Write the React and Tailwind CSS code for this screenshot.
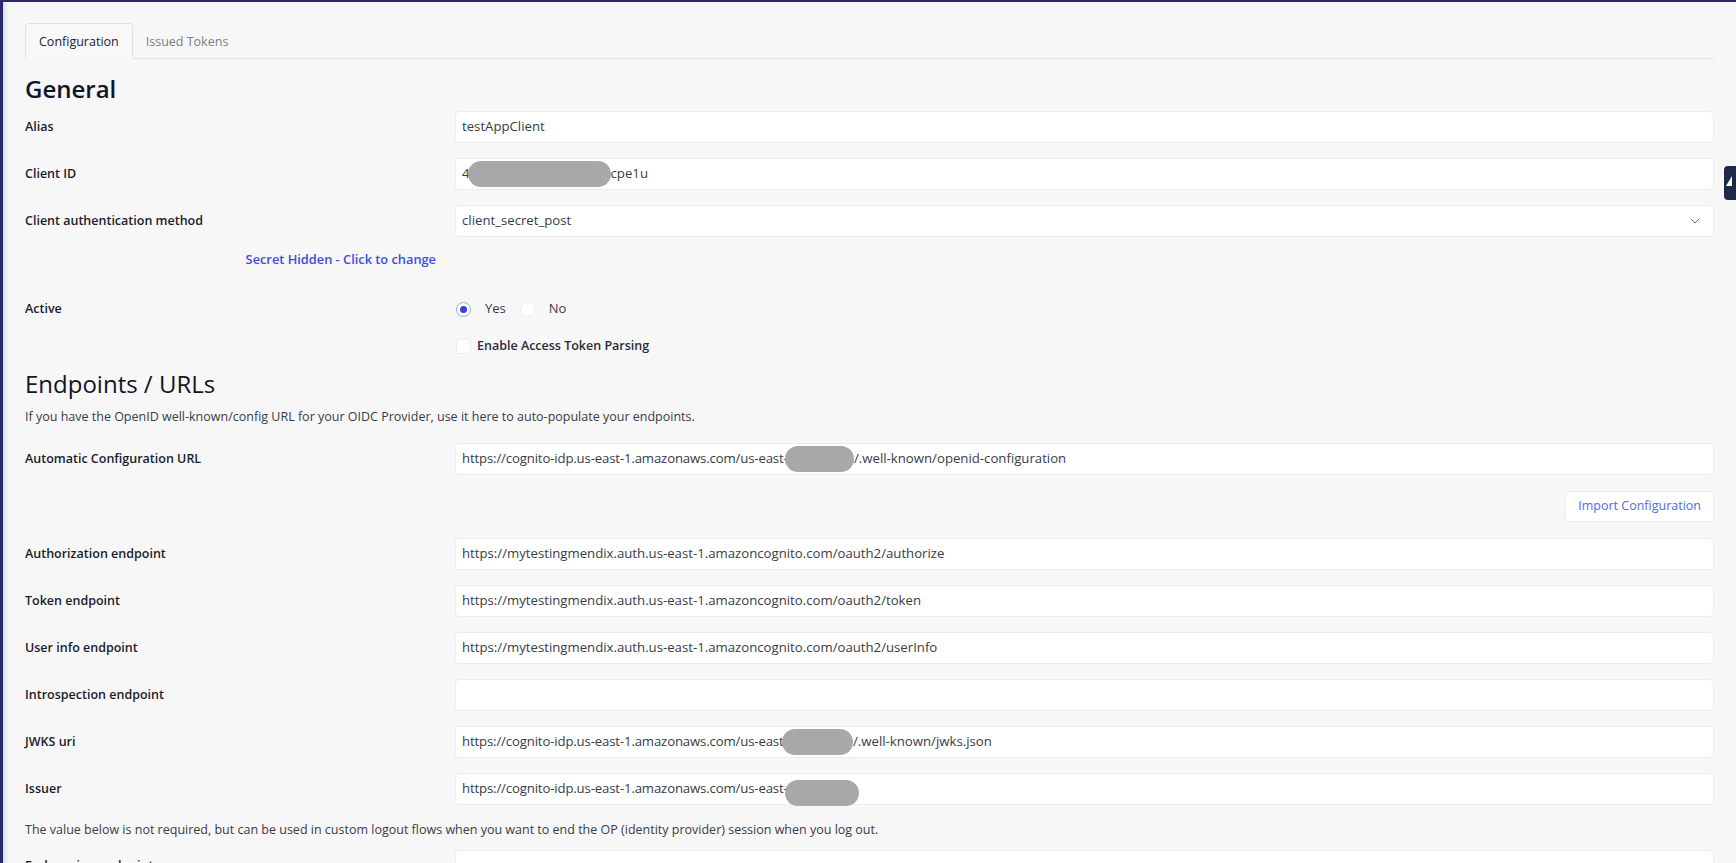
import { ChevronDown } from "lucide-react";

const Blob = ({ className }) => (
  <span className={`inline-block rounded-full bg-[#a8a8aa] align-middle ${className}`} />
);

const Field = ({ label, children, className = "" }) => (
  <div className={`flex items-center ${className}`}>
    <label className="w-[430px] shrink-0 text-[12.5px] font-semibold text-[#1b1d2a]">{label}</label>
    <div className="flex h-[32px] flex-1 items-center overflow-visible rounded-[4px] border border-[#ececec] bg-white px-[6px] text-[13.2px] whitespace-nowrap text-[#3a3c44]">
      {children}
    </div>
  </div>
);

const Radio = ({ checked, label }) => (
  <div className="flex items-center">
    <span
      className={`flex h-[15px] w-[15px] items-center justify-center rounded-full border bg-white ${
        checked ? "border-[#9aa6f2]" : "border-[#ececec]"
      }`}
    >
      {checked ? <span className="h-[7px] w-[7px] rounded-full bg-[#3346e2]" /> : null}
    </span>
    <span className="ml-[14px] text-[13px] text-[#3a3c44]">{label}</span>
  </div>
);

const endpoints = [
  { label: "Authorization endpoint", value: "https://mytestingmendix.auth.us-east-1.amazoncognito.com/oauth2/authorize" },
  { label: "Token endpoint", value: "https://mytestingmendix.auth.us-east-1.amazoncognito.com/oauth2/token" },
  { label: "User info endpoint", value: "https://mytestingmendix.auth.us-east-1.amazoncognito.com/oauth2/userInfo" },
  { label: "Introspection endpoint", value: "" }
];

const cognitoBase = "https://cognito-idp.us-east-1.amazonaws.com/us-east-1";

export default function App() {
  return (
    <div
      className="relative min-h-screen overflow-hidden border-t-2 border-l-[3px] border-[#29286c] bg-[#f7f7f7] shadow-[inset_5px_0_5px_-3px_rgba(0,0,0,0.12)]"
      style={{ fontFamily: '"Open Sans", "Noto Sans", sans-serif' }}
    >
      <div className="px-[22px] pt-[21px] pb-[10px]">
        <div className="flex h-[36px] border-b border-[#e3e3e3]">
          <div className="-mb-px flex items-center rounded-t-[4px] border border-[#e3e3e3] border-b-[#f7f7f7] bg-[#f8f8f8] px-[13px] pt-[3px] text-[12.5px] text-[#1f2230]">
            Configuration
          </div>
          <div className="flex items-center px-[13px] pt-[3px] text-[12.5px] text-[#7b7e88]">Issued Tokens</div>
        </div>

        <h2 className="mt-[14px] text-[24px] leading-[32px] font-semibold text-[#121526]">General</h2>

        <div className="mt-[6px] flex flex-col gap-[15px]">
          <Field label="Alias">testAppClient</Field>
          <Field label="Client ID">
            <span>4</span>
            <Blob className="-ml-[2px] h-[26px] w-[143px]" />
            <span>cpe1u</span>
          </Field>
          <Field label="Client authentication method">
            <span className="flex-1">client_secret_post</span>
            <ChevronDown size={16} strokeWidth={1.5} className="mr-[4px] text-[#6b6e78]" />
          </Field>
        </div>

        <div className="mt-[13px] flex h-[20px] items-center">
          <div className="flex w-[430px] justify-end pr-[19px]">
            <button type="button" className="text-[12.8px] font-semibold text-[#3b4fe0]">
              Secret Hidden - Click to change
            </button>
          </div>
        </div>

        <div className="mt-[29px] flex h-[20px] items-center">
          <label className="w-[430px] shrink-0 text-[12.5px] font-semibold text-[#1b1d2a]">Active</label>
          <div className="flex items-center gap-[14px] pl-[1px]">
            <Radio checked label="Yes" />
            <Radio label="No" />
          </div>
        </div>

        <div className="mt-[17px] flex h-[20px] items-center">
          <div className="w-[430px] shrink-0" />
          <span className="ml-[1px] h-[15px] w-[15px] rounded-[3px] border border-[#ececec] bg-white" />
          <span className="ml-[6px] text-[12.5px] font-semibold text-[#2a2c38]">Enable Access Token Parsing</span>
        </div>

        <h2 className="mt-[12px] text-[24px] leading-[32px] font-medium text-[#121526]">Endpoints / URLs</h2>
        <p className="mt-[7px] text-[12.5px] leading-[20px] text-[#3a3c44]">
          If you have the OpenID well-known/config URL for your OIDC Provider, use it here to auto-populate your endpoints.
        </p>

        <Field label="Automatic Configuration URL" className="mt-[16px]">
          <span className="tracking-[-0.15px]">{cognitoBase}</span>
          <Blob className="-ml-[10px] h-[26px] w-[69px]" />
          <span>/.well-known/openid-configuration</span>
        </Field>

        <div className="mt-[16px] flex justify-end">
          <button
            type="button"
            className="h-[31px] rounded-[4px] border border-[#ececec] bg-white px-[12px] text-[12.5px] text-[#5668e8]"
          >
            Import Configuration
          </button>
        </div>

        <div className="mt-[16px] flex flex-col gap-[15px]">
          {endpoints.map((item) => (
            <Field key={item.label} label={item.label}>
              {item.value}
            </Field>
          ))}
          <Field label="JWKS uri">
            <span className="tracking-[-0.15px]">{cognitoBase}</span>
            <Blob className="-ml-[13px] h-[26px] w-[71px]" />
            <span>/.well-known/jwks.json</span>
          </Field>
          <Field label="Issuer">
            <span className="tracking-[-0.15px]">{cognitoBase}</span>
            <Blob className="-ml-[10px] mt-[8px] h-[26px] w-[74px]" />
          </Field>
        </div>

        <p className="mt-[15px] text-[12.5px] leading-[20px] text-[#3a3c44]">
          The value below is not required, but can be used in custom logout flows when you want to end the OP (identity
          provider) session when you log out.
        </p>

        <Field label="End session endpoint" className="mt-[10px]">
          {""}
        </Field>
      </div>

      <div className="absolute top-[164px] right-0 flex h-[34px] w-[12px] items-start overflow-hidden rounded-l-[4px] bg-[#1f2a46] pt-[10px] pl-[2px]">
        <span className="block h-0 w-0 border-b-[10px] border-l-[6px] border-b-white border-l-transparent" />
      </div>
    </div>
  );
}
